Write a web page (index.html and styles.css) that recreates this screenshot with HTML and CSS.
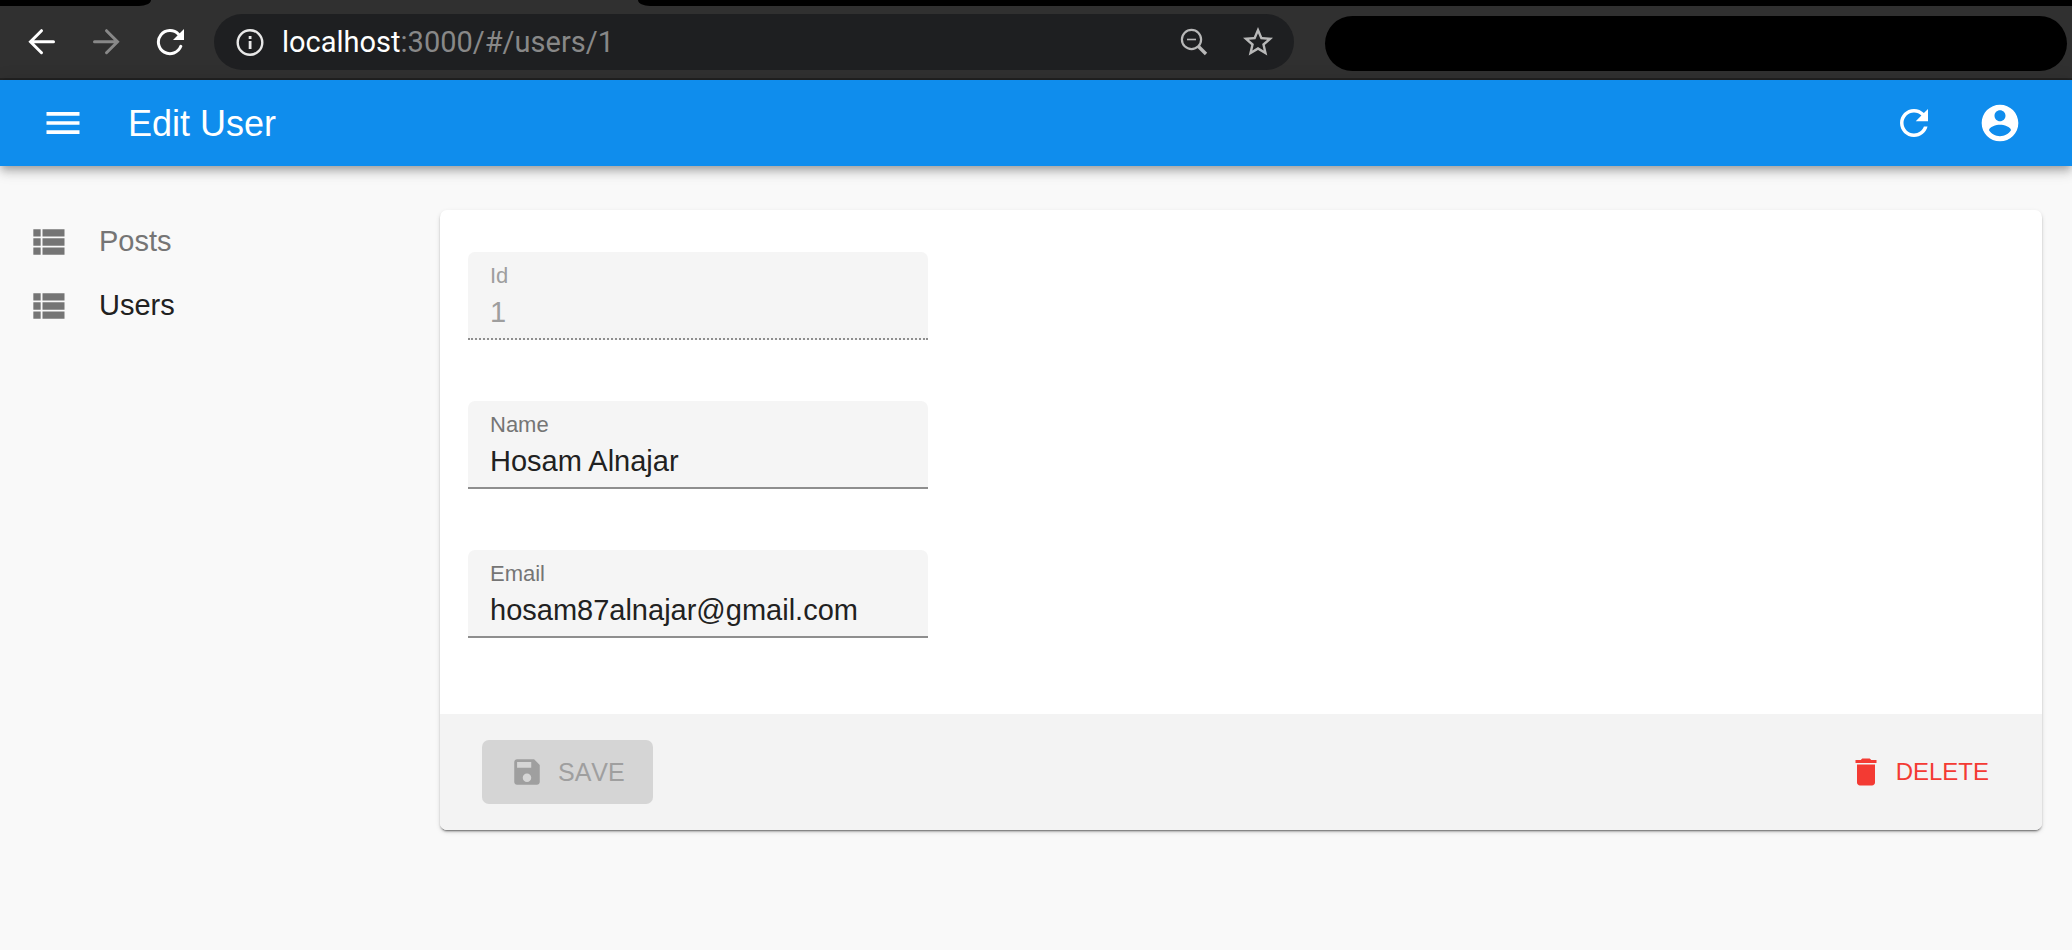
FILE: index.html
```html
<!DOCTYPE html>
<html lang="en">
<head>
<meta charset="utf-8">
<title>Edit User</title>
<link rel="stylesheet" href="styles.css">
</head>
<body>
<div class="browser">
  <div class="tabs">
    <div class="tabs-left"></div>
    <div class="tabs-right"></div>
  </div>
  <div class="toolbar">
    <nav class="history" aria-label="Browser">
      <button class="nav-btn" type="button" aria-label="Back">
        <svg width="28" height="28" viewBox="0 0 28 28" fill="none" stroke="currentColor" stroke-width="3" stroke-linecap="round"><path d="M25.500 13.700H3M13.500 2.700 2.500 13.700l11 11"/></svg>
      </button>
      <button class="nav-btn nav-btn-off" type="button" aria-label="Forward">
        <svg width="28" height="28" viewBox="0 0 28 28" fill="none" stroke="currentColor" stroke-width="3" stroke-linecap="round"><path d="M2.500 13.700H25M14.500 2.700l11 11-11 11"/></svg>
      </button>
      <button class="nav-btn" type="button" aria-label="Reload">
        <svg width="28" height="28" viewBox="0 0 28 28"><path d="M24.800 18.300A11.600 11.600 0 1 1 22.500 6.200" fill="none" stroke="currentColor" stroke-width="3" stroke-linecap="round"/><path d="M28 1v11H17z" fill="currentColor"/></svg>
      </button>
    </nav>
    <div class="address">
      <svg class="info" width="28" height="28" viewBox="0 0 28 28"><circle cx="14" cy="14.500" r="12.300" fill="none" stroke="currentColor" stroke-width="2.400"/><path d="M12.700 13h2.800v8h-2.800zM12.700 8h2.800v2.900h-2.800z" fill="currentColor"/></svg>
      <div class="url"><span class="host">localhost</span>:3000/#/users/1</div>
      <button class="addr-btn" type="button" aria-label="Zoom">
        <svg width="28" height="28" viewBox="0 0 28 28" fill="none" stroke="currentColor"><circle cx="11.500" cy="11.500" r="9.600" stroke-width="2.200"/><path d="M7 11.500h9" stroke-width="1.600"/><path d="M18.500 18.500 26 26" stroke-width="3.400"/></svg>
      </button>
      <button class="addr-btn" type="button" aria-label="Bookmark this page">
        <svg width="36" height="36" viewBox="0 0 24 24" fill="currentColor"><path d="M22 9.240l-7.190-.62L12 2 9.190 8.630 2 9.240l5.460 4.730L5.820 21 12 17.270 18.180 21l-1.630-7.030L22 9.240zM12 15.400l-3.760 2.270 1-4.280-3.320-2.880 4.380-.38L12 6.100l1.710 4.040 4.380.38-3.320 2.880 1 4.280L12 15.400z"/></svg>
      </button>
    </div>
    <div class="extensions"></div>
  </div>
</div>

<header class="appbar">
  <button class="icon-btn" type="button" aria-label="Menu">
    <svg width="44" height="44" viewBox="0 0 24 24" fill="currentColor"><path d="M3 18h18v-2H3v2zm0-5h18v-2H3v2zm0-7v2h18V6H3z"/></svg>
  </button>
  <h1 class="title">Edit User</h1>
  <button class="icon-btn" type="button" aria-label="Refresh">
    <svg width="42" height="42" viewBox="0 0 24 24" fill="currentColor"><path d="M17.650 6.350C16.200 4.900 14.210 4 12 4c-4.420 0-7.990 3.580-7.990 8s3.570 8 7.990 8c3.730 0 6.840-2.550 7.730-6h-2.080c-.82 2.330-3.040 4-5.650 4-3.310 0-6-2.690-6-6s2.690-6 6-6c1.660 0 3.140.69 4.220 1.780L13 11h7V4l-2.350 2.350z"/></svg>
  </button>
  <button class="icon-btn" type="button" aria-label="Profile">
    <svg width="44" height="44" viewBox="0 0 24 24" fill="currentColor"><path d="M12 2C6.480 2 2 6.480 2 12s4.480 10 10 10 10-4.480 10-10S17.520 2 12 2zm0 3c1.660 0 3 1.340 3 3s-1.340 3-3 3-3-1.340-3-3 1.340-3 3-3zm0 14.200c-2.500 0-4.710-1.280-6-3.220.03-1.990 4-3.080 6-3.080 1.990 0 5.970 1.090 6 3.080-1.290 1.940-3.500 3.220-6 3.220z"/></svg>
  </button>
</header>

<div class="layout">
  <nav class="sidebar" aria-label="Resources">
    <a class="menu-item" href="#/posts">
      <svg width="44" height="44" viewBox="0 0 24 24"><path d="M4 14h4v-4H4v4zm0 5h4v-4H4v4zM4 9h4V5H4v4zm5 5h12v-4H9v4zm0 5h12v-4H9v4zM9 5v4h12V5H9z"/></svg>
      <span class="menu-text">Posts</span>
    </a>
    <a class="menu-item menu-item-active" href="#/users" aria-current="page">
      <svg width="44" height="44" viewBox="0 0 24 24"><path d="M4 14h4v-4H4v4zm0 5h4v-4H4v4zM4 9h4V5H4v4zm5 5h12v-4H9v4zm0 5h12v-4H9v4zM9 5v4h12V5H9z"/></svg>
      <span class="menu-text">Users</span>
    </a>
  </nav>
  <main class="content">
    <form class="card">
      <div class="fields">
        <div class="field field-off">
          <label for="id">Id</label>
          <input id="id" type="text" value="1" disabled>
        </div>
        <div class="field">
          <label for="name">Name</label>
          <input id="name" type="text" value="Hosam Alnajar">
        </div>
        <div class="field">
          <label for="email">Email</label>
          <input id="email" type="text" value="hosam87alnajar@gmail.com">
        </div>
      </div>
      <div class="actions">
        <button class="save" type="submit" disabled>
          <svg width="34" height="34" viewBox="0 0 24 24" fill="currentColor"><path d="M17 3H5c-1.110 0-2 .9-2 2v14c0 1.100.89 2 2 2h14c1.100 0 2-.9 2-2V7l-4-4zm-5 16c-1.660 0-3-1.340-3-3s1.340-3 3-3 3 1.340 3 3-1.340 3-3 3zm3-10H5V5h10v4z"/></svg>
          SAVE
        </button>
        <button class="delete" type="button">
          <svg width="36" height="36" viewBox="0 0 24 24" fill="currentColor"><path d="M6 19c0 1.100.9 2 2 2h8c1.100 0 2-.9 2-2V7H6v12zM19 4h-3.500l-1-1h-5l-1 1H5v2h14V4z"/></svg>
          DELETE
        </button>
      </div>
    </form>
  </main>
</div>
</body>
</html>
```
FILE: styles.css
```css
* {
  box-sizing: border-box;
}

body {
  margin: 0;
  background: #f9f9f9;
  color: #212121;
  font-family: "Liberation Sans", Arial, sans-serif;
  font-size: 29px;
}

button {
  display: flex;
  align-items: center;
  justify-content: center;
  flex: none;
  padding: 0;
  border: 0;
  background: none;
  color: inherit;
  font-family: inherit;
}

svg {
  display: block;
  flex: none;
}

/* Browser frame */
.browser {
  background: #303030;
  border-bottom: 2px solid #222;
}

.tabs {
  display: flex;
  justify-content: space-between;
  gap: 487px;
  height: 6px;
}

.tabs-left,
.tabs-right {
  background: #000;
}

.tabs-left {
  flex: none;
  width: 151px;
  border-bottom-right-radius: 12px 6px;
}

.tabs-right {
  flex: 1;
  border-bottom-left-radius: 12px 6px;
}

.toolbar {
  display: flex;
  align-items: center;
  height: 72px;
  padding: 0 5px 0 28px;
}

.history {
  display: flex;
  gap: 36px;
  margin-right: 30px;
}

.nav-btn {
  color: #fff;
}

.nav-btn-off {
  color: #888;
}

.address {
  display: flex;
  align-items: center;
  flex: 1 1 1080px;
  height: 56px;
  padding: 0 18px 0 22px;
  border-radius: 28px;
  background: #1e1f21;
  color: #b8b8b8;
}

.info {
  color: #e8e8e8;
}

.url {
  flex: 1;
  margin-left: 18px;
  color: #888;
  font-family: Roboto, sans-serif;
  font-size: 29px;
  line-height: 36px;
}

.host {
  color: #fff;
}

.addr-btn + .addr-btn {
  margin-left: 32px;
}

.extensions {
  flex: 1 1 742px;
  height: 55px;
  margin: 3px 0 0 31px;
  border-radius: 28px;
  background: #000;
}

/* App bar */
.appbar {
  display: flex;
  align-items: center;
  padding: 0 29px 0 20px;
  background: #0f8ded;
  color: #fff;
  box-shadow: 0 4px 7px -2px rgba(0, 0, 0, .2), 0 7px 9px rgba(0, 0, 0, .14), 0 2px 18px rgba(0, 0, 0, .12);
}

.icon-btn {
  width: 86px;
  height: 86px;
}

.title {
  flex: 1;
  margin: 0 0 0 22px;
  padding-top: 2px;
  font-size: 36px;
  font-weight: 400;
  line-height: 58px;
}

/* Page body */
.layout {
  display: flex;
  padding: 44px 30px 8px 0;
}

.sidebar {
  flex: none;
  width: 440px;
}

.menu-item {
  display: flex;
  align-items: center;
  gap: 29px;
  height: 64px;
  padding-left: 26px;
  color: #757575;
  text-decoration: none;
}

.menu-item svg {
  fill: #757575;
}

.menu-text {
  padding-bottom: 2px;
}

.menu-item-active {
  color: #212121;
}

.content {
  flex: 1;
}

.card {
  overflow: hidden;
  border-radius: 7px;
  background: #fff;
  box-shadow: 0 2px 1px -1px rgba(0, 0, 0, .3), 0 2px 2px rgba(0, 0, 0, .2), 0 2px 5px rgba(0, 0, 0, .12);
}

.fields {
  display: grid;
  grid-template-columns: 460px;
  gap: 61px;
  padding: 42px 28px 76px;
}

.field {
  display: flex;
  flex-direction: column;
  padding: 11px 22px 2px;
  border-bottom: 2px solid #8e8e8e;
  border-radius: 7px 7px 0 0;
  background: #f5f5f5;
}

.field label {
  color: #757575;
  font-size: 22px;
  line-height: 26px;
}

.field input {
  width: 100%;
  height: 47px;
  padding: 0;
  border: 0;
  background: none;
  color: #212121;
  font: inherit;
}

.field-off {
  border-bottom-style: dotted;
}

.field-off label,
.field-off input {
  color: #9e9e9e;
}

.actions {
  display: flex;
  align-items: center;
  justify-content: space-between;
  padding: 26px 42px;
  background: #f3f3f3;
}

.save {
  gap: 14px;
  height: 64px;
  padding: 0 28px;
  border-radius: 7px;
  background: #d5d5d5;
  color: #9f9f9f;
  font-size: 25px;
  font-kerning: none;
}

.delete {
  gap: 12px;
  height: 54px;
  padding: 0 11px;
  color: #f33a33;
  font-size: 24px;
}
```
